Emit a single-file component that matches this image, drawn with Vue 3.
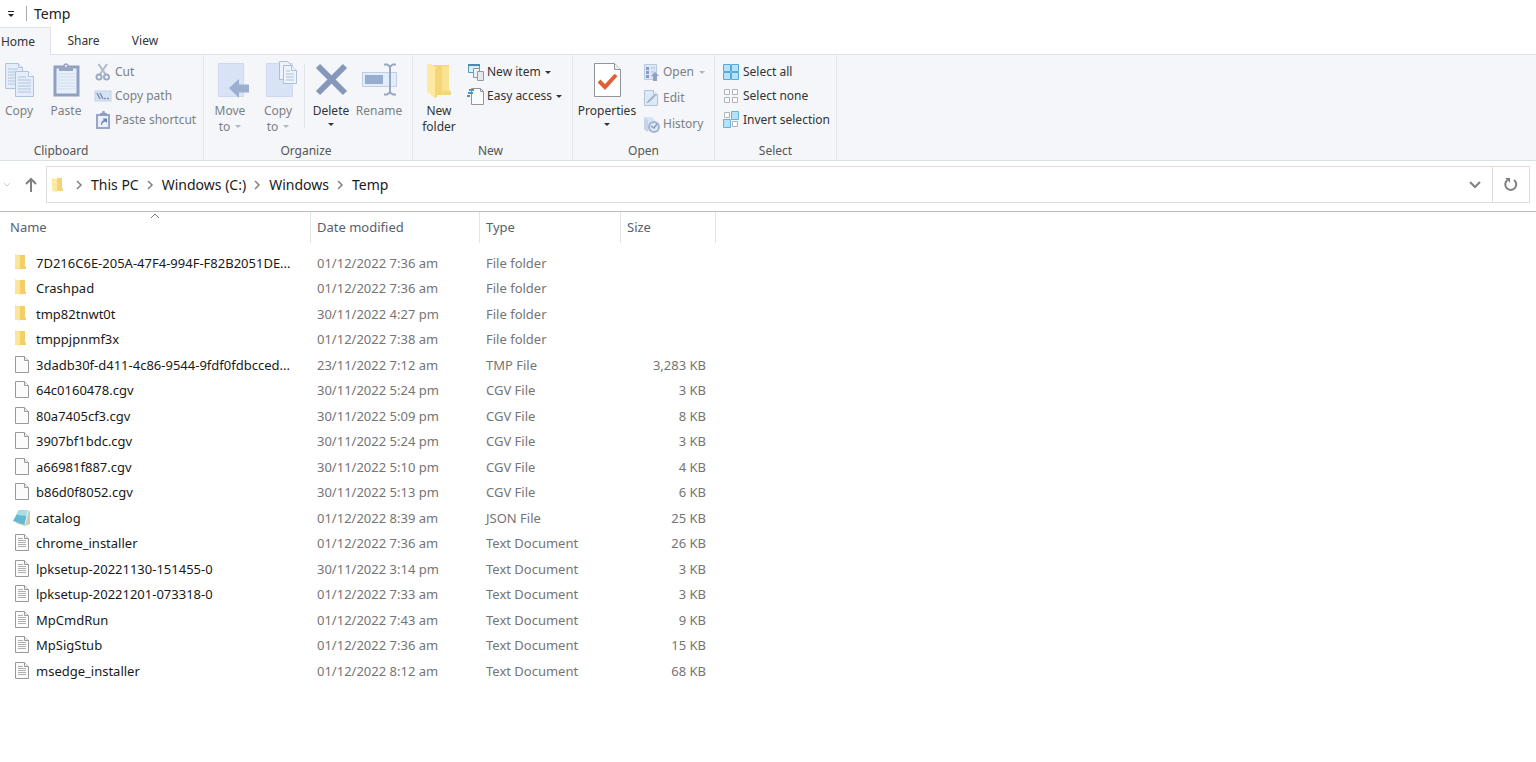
<script setup>
import { ref } from 'vue'

const path = ['This PC', 'Windows (C:)', 'Windows', 'Temp']
const columns = ['Name', 'Date modified', 'Type', 'Size']
const files = ref([
  { icon: 'folder', name: '7D216C6E-205A-47F4-994F-F82B2051DE...', date: '01/12/2022 7:36 am', type: 'File folder', size: '' },
  { icon: 'folder', name: 'Crashpad', date: '01/12/2022 7:36 am', type: 'File folder', size: '' },
  { icon: 'folder', name: 'tmp82tnwt0t', date: '30/11/2022 4:27 pm', type: 'File folder', size: '' },
  { icon: 'folder', name: 'tmppjpnmf3x', date: '01/12/2022 7:38 am', type: 'File folder', size: '' },
  { icon: 'file', name: '3dadb30f-d411-4c86-9544-9fdf0fdbcced...', date: '23/11/2022 7:12 am', type: 'TMP File', size: '3,283 KB' },
  { icon: 'file', name: '64c0160478.cgv', date: '30/11/2022 5:24 pm', type: 'CGV File', size: '3 KB' },
  { icon: 'file', name: '80a7405cf3.cgv', date: '30/11/2022 5:09 pm', type: 'CGV File', size: '8 KB' },
  { icon: 'file', name: '3907bf1bdc.cgv', date: '30/11/2022 5:24 pm', type: 'CGV File', size: '3 KB' },
  { icon: 'file', name: 'a66981f887.cgv', date: '30/11/2022 5:10 pm', type: 'CGV File', size: '4 KB' },
  { icon: 'file', name: 'b86d0f8052.cgv', date: '30/11/2022 5:13 pm', type: 'CGV File', size: '6 KB' },
  { icon: 'json', name: 'catalog', date: '01/12/2022 8:39 am', type: 'JSON File', size: '25 KB' },
  { icon: 'text', name: 'chrome_installer', date: '01/12/2022 7:36 am', type: 'Text Document', size: '26 KB' },
  { icon: 'text', name: 'lpksetup-20221130-151455-0', date: '30/11/2022 3:14 pm', type: 'Text Document', size: '3 KB' },
  { icon: 'text', name: 'lpksetup-20221201-073318-0', date: '01/12/2022 7:33 am', type: 'Text Document', size: '3 KB' },
  { icon: 'text', name: 'MpCmdRun', date: '01/12/2022 7:43 am', type: 'Text Document', size: '9 KB' },
  { icon: 'text', name: 'MpSigStub', date: '01/12/2022 7:36 am', type: 'Text Document', size: '15 KB' },
  { icon: 'text', name: 'msedge_installer', date: '01/12/2022 8:12 am', type: 'Text Document', size: '68 KB' },
])
</script>

<template>
  <div class="explorer">
    <header class="titlebar">
      <button class="quick" aria-label="Customize Quick Access Toolbar">
        <svg width="8" height="8" viewBox="0 0 8 8"><path d="M1 1.500h6" stroke="#222" /><path d="M1 4h6L4 7z" fill="#222" /></svg>
      </button>
      <h1>Temp</h1>
    </header>

    <nav class="tabs">
      <button class="tab active">Home</button>
      <button class="tab">Share</button>
      <button class="tab">View</button>
    </nav>

    <div class="ribbon">
      <section class="group clipboard">
        <div class="tools">
          <button class="big copy dim">
            <svg width="38" height="40" viewBox="0 0 38 40">
              <g fill="#e3edf9" stroke="#a9bedb">
                <path d="M5.500 2.500h13l4 4v21h-17z" /><path d="M18.500 2.500v4h4" />
                <path d="M8 8h10M8 11h12M8 14h12M8 17h12M8 20h12M8 23h12" />
                <path d="M15.500 10.500h13l5 5v20h-18z" /><path d="M28.500 10.500v5h5" fill="#fff" />
                <path d="M18 16h8M18 19h13M18 22h13M18 25h13M18 28h13M18 31h13" />
              </g>
            </svg>
            <span>Copy</span>
          </button>
          <button class="big paste dim">
            <svg width="38" height="40" viewBox="0 0 38 40">
              <rect x="8" y="6" width="23" height="28" fill="#e6effb" stroke="#8497bb" stroke-width="3" />
              <path d="M11 13h17M11 16h17M11 19h17M11 22h17M11 25h17M11 28h17" stroke="#cfdded" />
              <path d="M12 10V6h4c0-5 6-5 6 0h4v4z" fill="#8f9fbb" /><circle cx="19" cy="5" r="1" fill="#f4f6f9" />
            </svg>
            <span>Paste</span>
          </button>
          <div class="stack">
            <button class="small dim">
              <svg width="18" height="18" viewBox="0 0 18 18" fill="none" stroke="#93a4c1">
                <path d="M4.500 1L12 12M13 1L5.500 12" stroke-width="2" stroke="#a8b4c7" />
                <circle cx="5" cy="14" r="2.500" stroke-width="2" /><circle cx="12.500" cy="14" r="2.500" stroke-width="2" />
              </svg>Cut
            </button>
            <button class="small dim">
              <svg width="18" height="18" viewBox="0 0 18 18">
                <rect x="1" y="4" width="16" height="10" fill="#d4e1f3" stroke="#bfd0e8" />
                <path d="M3 6l3 6M6 6l3 6M10 11.500h2M13 11.500h2" stroke="#6f88b6" stroke-width="1.500" fill="none" />
              </svg>Copy path
            </button>
            <button class="small dim">
              <svg width="18" height="18" viewBox="0 0 18 18">
                <rect x="3" y="4" width="12" height="13" fill="#e9f1fc" stroke="#8d9fc0" stroke-width="2" />
                <path d="M6 5V2h2c0-3 3-3 3 0h2v3z" fill="#8797b4" />
                <path d="M7 14c0-3 1-4 3-5L8.500 7.500H13V12l-1.500-1.500C9 11 8 12 8 14z" fill="#5676af" />
              </svg>Paste shortcut
            </button>
          </div>
        </div>
        <h2>Clipboard</h2>
      </section>

      <section class="group organize">
        <div class="tools">
          <button class="big dim">
            <svg width="38" height="40" viewBox="0 0 38 40">
              <path d="M7.500 2.500h25v33h-25z" fill="#d6e3f5" stroke="#c7d8ee" />
              <path d="M18 27L28 18v5.500h10v8H28V37z" fill="#93a8cd" />
            </svg>
            <span>Move<br />to <i class="caret"></i></span>
          </button>
          <button class="big dim">
            <svg width="38" height="40" viewBox="0 0 38 40">
              <path d="M7.500 2.500h26v33h-26z" fill="#d6e3f5" stroke="#c7d8ee" />
              <g fill="#edf3fb" stroke="#a7b9d6"><path d="M20.500 .500h8l4 4v14h-12z" /><path d="M24.500 4.500h8l5 5v13h-13z" /><path d="M32.500 4.500v5h5M27 10h4M27 13h8M27 16h8M27 19h8" /></g>
            </svg>
            <span>Copy<br />to <i class="caret"></i></span>
          </button>
          <div class="rule"></div>
          <button class="big">
            <svg width="38" height="40" viewBox="0 0 38 40"><path d="M6 5l27 27M33 5L6 32" stroke="#8598bb" stroke-width="6" /></svg>
            <span>Delete</span><i class="caret"></i>
          </button>
          <button class="big dim">
            <svg width="38" height="40" viewBox="0 0 38 40">
              <rect x="2.500" y="11.500" width="34" height="14" fill="#e2ecf9" stroke="#b9cbe5" />
              <rect x="5" y="14" width="18" height="9" fill="#8fa5cb" />
              <path d="M24 3.500h3l3 2 3-2h3M30 5v27M24 33.500h3l3-2 3 2h3" stroke="#8c9fbe" stroke-width="2" fill="none" />
            </svg>
            <span>Rename</span>
          </button>
        </div>
        <h2>Organize</h2>
      </section>

      <section class="group new">
        <div class="tools">
          <button class="big">
            <svg width="38" height="40" viewBox="0 0 38 40">
              <path d="M11 4h18v25l2 2v3H14z" fill="#f5d675" /><path d="M22 5h7v25h-7z" fill="#fae293" />
              <path d="M7 3h4l6 4v29l-2 1-8-6z" fill="#ffeaa4" /><path d="M15 7l2 1v28l-2 1z" fill="#f6d47a" />
            </svg>
            <span>New<br />folder</span>
          </button>
          <div class="stack">
            <button class="small">
              <svg width="18" height="18" viewBox="0 0 18 18">
                <path d="M1.500 1.500h11v8h-11z" fill="#d7eef9" stroke="#5c97b9" /><path d="M1 2h12" stroke="#4c8bb0" stroke-width="2" />
                <path d="M6.500 5.500h6v9h-6z" fill="#eef1f4" stroke="#8b97a2" /><path d="M10.500 8.500h6v9h-6z" fill="#e5e8ed" stroke="#929ba5" />
              </svg>New item <i class="caret"></i>
            </button>
            <button class="small">
              <svg width="18" height="18" viewBox="0 0 18 18">
                <path d="M4.500 1.500h9l3 3v13h-12z" fill="#fafbfc" stroke="#8f969e" /><path d="M13.500 1.500v3h3" fill="none" stroke="#8f969e" />
                <path d="M2 3h5M1 6h5M0 9h3" stroke="#4c93bd" stroke-width="2" />
              </svg>Easy access <i class="caret"></i>
            </button>
          </div>
        </div>
        <h2>New</h2>
      </section>

      <section class="group open">
        <div class="tools">
          <button class="big properties">
            <svg width="38" height="40" viewBox="0 0 38 40">
              <path d="M6.500 2.500h20l6 6v27h-26z" fill="#fff" stroke="#90959b" /><path d="M26.500 2.500v6h6" fill="#edf0f3" stroke="#90959b" />
              <path d="M11 20l6 6 11-12" fill="none" stroke="#df6035" stroke-width="4" />
            </svg>
            <span>Properties</span><i class="caret"></i>
          </button>
          <div class="stack loose">
            <button class="small dim">
              <svg width="18" height="18" viewBox="0 0 18 18">
                <path d="M2.500 1.500h12v15h-12z" fill="#dbe6f5" stroke="#b3c5df" />
                <path d="M4 4h3v3H4zM4 8h3v3H4zM4 12h3v3H4z" fill="#7c93bf" /><path d="M9 5h4M9 9h4M9 13h3" stroke="#a8bad6" />
                <path d="M13 9l4 4h-2v5h-4v-5H9z" fill="#8498bd" />
              </svg>Open <i class="caret"></i>
            </button>
            <button class="small dim">
              <svg width="18" height="18" viewBox="0 0 18 18">
                <path d="M2.500 1.500h9l4 4v11h-13z" fill="#dce8f7" stroke="#a9bdd9" /><path d="M11.500 1.500v4h4" fill="#fff" stroke="#a9bdd9" />
                <path d="M5 14l1-3 7-7 2 2-7 7z" fill="#b6c7e2" /><path d="M5 14l9-9" stroke="#7f97bd" />
              </svg>Edit
            </button>
            <button class="small dim">
              <svg width="18" height="18" viewBox="0 0 18 18">
                <path d="M3 2h7l3 3v11H3z" fill="#d5e2f3" /><path d="M2 2l4 3v12l-4-3z" fill="#bfd1ea" />
                <circle cx="12" cy="12" r="5" fill="#dce6f4" stroke="#9cadc9" stroke-width="2" /><path d="M9 11l3 2 3-4" stroke="#7e92b5" stroke-width="1.500" fill="none" />
              </svg>History
            </button>
          </div>
        </div>
        <h2>Open</h2>
      </section>

      <section class="group select">
        <div class="tools">
          <div class="stack">
            <button class="small">
              <svg width="18" height="18" viewBox="0 0 18 18"><path d="M1.500 1.500h7v7h-7zM9.500 1.500h7v7h-7zM1.500 9.500h7v7h-7zM9.500 9.500h7v7h-7z" fill="#b5e2fb" stroke="#55a9d6" /></svg>Select all
            </button>
            <button class="small">
              <svg width="18" height="18" viewBox="0 0 18 18"><path d="M2.500 2.500h5v5h-5zM10.500 2.500h5v5h-5zM2.500 10.500h5v5h-5zM10.500 10.500h5v5h-5z" fill="#fafbfc" stroke="#b0b3b7" /></svg>Select none
            </button>
            <button class="small">
              <svg width="18" height="18" viewBox="0 0 18 18">
                <path d="M2.500 1.500h5v5h-5zM10.500 10.500h5v5h-5z" fill="#fafbfc" stroke="#b0b3b7" />
                <path d="M9.500 .500h7v8h-7zM1.500 8.500h7v8h-7z" fill="#b5e2fb" stroke="#68b2da" />
              </svg>Invert selection
            </button>
          </div>
        </div>
        <h2>Select</h2>
      </section>
    </div>

    <div class="navigation">
      <button class="recent" aria-label="Recent locations"><svg width="8" height="8" viewBox="0 0 8 8"><path d="M1 2l3 3 3-3" fill="none" stroke="#ccc" /></svg></button>
      <button class="up" aria-label="Up"><svg width="14" height="16" viewBox="0 0 14 16"><path d="M7 15V2M2 7l5-5 5 5" fill="none" stroke="#808080" stroke-width="2" /></svg></button>
      <nav class="address" aria-label="Address">
        <svg class="place" width="12" height="16" viewBox="0 0 12 16"><path d="M0 2h10v12H0z" fill="#f8dc83" /><path d="M5 1h5v10l1 1v2H5z" fill="#f5d475" /><path d="M0 1l5 1v13l-5-1z" fill="#fce9a4" /></svg>
        <template v-for="part in path" :key="part">
          <svg class="chevron" width="8" height="10" viewBox="0 0 8 10"><path d="M2 1l4 4-4 4" fill="none" stroke="#808080" stroke-width="1.500" /></svg>
          <a href="#">{{ part }}</a>
        </template>
        <button class="history" aria-label="Previous locations"><svg width="12" height="10" viewBox="0 0 12 10"><path d="M1 2l5 5 5-5" fill="none" stroke="#808080" stroke-width="2" /></svg></button>
        <button class="refresh" aria-label="Refresh">
          <svg width="16" height="16" viewBox="0 0 16 16"><path d="M11 3a5.500 5.500 0 1 1-6.500 0" fill="none" stroke="#808080" stroke-width="2" /><path d="M2 1h5v5L5.500 4z" fill="#808080" /></svg>
        </button>
      </nav>
    </div>

    <main>
      <table>
        <colgroup><col class="c-name" /><col class="c-date" /><col class="c-type" /><col class="c-size" /></colgroup>
        <thead>
          <tr>
            <th v-for="column in columns" :key="column" scope="col">
              <button>{{ column }}
                <svg v-if="column === 'Name'" class="sort" width="10" height="6" viewBox="0 0 10 6"><path d="M1 5l4-4 4 4" fill="none" stroke="#777" /></svg>
              </button>
            </th>
          </tr>
        </thead>
        <tbody>
          <tr v-for="file in files" :key="file.name">
            <td>
              <div class="entry">
                <svg v-if="file.icon === 'folder'" width="18" height="18" viewBox="0 0 18 18"><path d="M2 1h10v14H2z" fill="#f8dc83" /><path d="M7 1h5v11l1 1v2H7z" fill="#f3cf69" /><path d="M2 0l5 2v14l-5-2z" fill="#fce49a" /></svg>
                <svg v-else-if="file.icon === 'json'" width="18" height="18" viewBox="0 0 18 18"><path d="M13 1l4 1v13l-5 2-9-3z" fill="#c9cbb5" /><path d="M6 1l9 1-3 14-12-4z" fill="#63b9d2" /><path d="M6 1l9 1-1 5-10-1z" fill="#a8dce7" /><path d="M15 2l-3 14" stroke="#eef5f3" /></svg>
                <svg v-else width="18" height="18" viewBox="0 0 18 18">
                  <path d="M2.500 .500h9l4 4v12h-13z" fill="#fbfbfb" stroke="#999" /><path d="M11.500 .500v4h4" fill="#eee" stroke="#999" />
                  <path v-if="file.icon === 'text'" d="M5 4.500h5M5 6.500h8M5 8.500h8M5 10.500h8M5 12.500h8" stroke="#b0b0b0" />
                </svg>
                <span>{{ file.name }}</span>
              </div>
            </td>
            <td>{{ file.date }}</td>
            <td>{{ file.type }}</td>
            <td class="size">{{ file.size }}</td>
          </tr>
        </tbody>
      </table>
    </main>
  </div>
</template>

<style>
body { background: #fff; }
</style>

<style scoped>
.explorer { font: 12px/16px "Noto Sans", "Open Sans", sans-serif; color: #333; }
* { box-sizing: border-box; }
button { font: inherit; color: inherit; background: none; border: 0; padding: 0; margin: 0; }
svg { display: block; flex: none; }
h1, h2 { margin: 0; font-weight: 400; }

.titlebar { display: flex; align-items: center; height: 27px; }
.quick { width: 27px; height: 15px; padding-left: 7px; border-right: 1px solid #aaa; }
h1 { font-size: 14px; line-height: 20px; color: #222; padding-left: 7px; }

.tabs { display: flex; height: 28px; border-bottom: 1px solid #dfe2e6; }
.tab { height: 27px; width: 62px; }
.tab.active { width: 51px; height: 28px; padding-right: 14px; background: #f4f6f9; border-top: 1px solid #dfe2e6; border-right: 1px solid #dfe2e6; }
.tab:nth-child(2) { width: 65px; }
.tab:nth-child(3) { width: 58px; }

.ribbon { display: flex; height: 106px; background: #f4f6f9; border-bottom: 1px solid #d9e0e6; }
.group { display: flex; flex-direction: column; justify-content: space-between; padding: 5px 0 1px; border-right: 1px solid #e5e7eb; }
.group h2 { font-size: 12px; line-height: 16px; text-align: center; color: #555; }
.tools { display: flex; align-items: flex-start; }
.clipboard { width: 285px; margin-left: -81px; }
.clipboard .tools { padding-left: 81px; }
.organize { width: 209px; }
.organize .tools { padding-left: 2px; }
.organize h2 { padding-right: 4px; }
.new { width: 160px; }
.new .tools { padding-left: 2px; }
.new h2 { padding-right: 4px; }
.open { width: 142px; }
.open .tools { padding-left: 4px; }
.select { width: 122px; }
.select .tools { padding-left: 7px; }
.big { width: 48px; padding-top: 1px; display: flex; flex-direction: column; align-items: center; }
.big span { margin-top: 2px; white-space: nowrap; }
.big > .caret { margin-top: 4px; }
.copy { width: 38px; }
.paste { width: 56px; }
.properties { width: 60px; }
.rule { width: 1px; height: 64px; margin: 4px 2px 0; background: #e2e4e8; }
.dim { color: #7c7f84; }
.dim svg { opacity: 0.9; }
.caret { display: inline-block; border: 3px solid transparent; border-top-color: #333; border-bottom-width: 0; vertical-align: 3px; margin-left: 2px; }
.big > .caret { margin-left: 0; }
.dim .caret { border-top-color: #b4b7bb; }
.stack { display: flex; flex-direction: column; }
.stack.loose { gap: 2px; padding-left: 5px; }
.new .stack { padding-left: 4px; }
.small { display: flex; align-items: center; gap: 3px; height: 24px; white-space: nowrap; }
.new .small { gap: 2px; }

.navigation { display: flex; align-items: center; height: 51px; padding: 0 6px 3px 0; border-bottom: 1px solid #bcbcbc; }
.recent { width: 14px; padding-left: 3px; }
.up { width: 32px; padding-left: 10px; }
.address { flex: 1; display: flex; align-items: center; height: 37px; border: 1px solid #ddd; font-size: 14px; line-height: 18px; color: #1a1a1a; }
.place { margin-left: 5px; }
.chevron { margin: 0 8px 0 7px; }
.place + .chevron { margin-left: 11px; }
.address a { color: inherit; text-decoration: none; white-space: nowrap; }
.history { display: flex; justify-content: center; margin-left: auto; width: 24px; }
.refresh { display: flex; align-items: center; justify-content: center; width: 37px; height: 35px; margin-left: 5px; border-left: 1px solid #ddd; }

table { table-layout: fixed; width: 716px; border-collapse: collapse; font-size: 13px; line-height: 18px; }
.c-name { width: 311px; }
.c-date { width: 169px; }
.c-type { width: 141px; }
.c-size { width: 95px; }
th { padding: 0 0 7px; font-weight: 400; }
th button { position: relative; display: block; width: 100%; height: 31px; text-align: left; padding: 0 0 2px 6px; border-right: 1px solid #e2e5e8; color: #56616e; }
th:first-child button { padding-left: 10px; }
.sort { position: absolute; top: 1px; left: 0; right: 0; margin: 0 auto; }
td { height: 25px; padding: 0 0 0 6px; color: #757575; white-space: nowrap; }
tr:nth-child(even) td { height: 26px; }
td:first-child { padding-left: 13px; }
td.size { text-align: right; padding-right: 10px; }
.entry { display: flex; align-items: center; gap: 5px; color: #1a1a1a; }
</style>
